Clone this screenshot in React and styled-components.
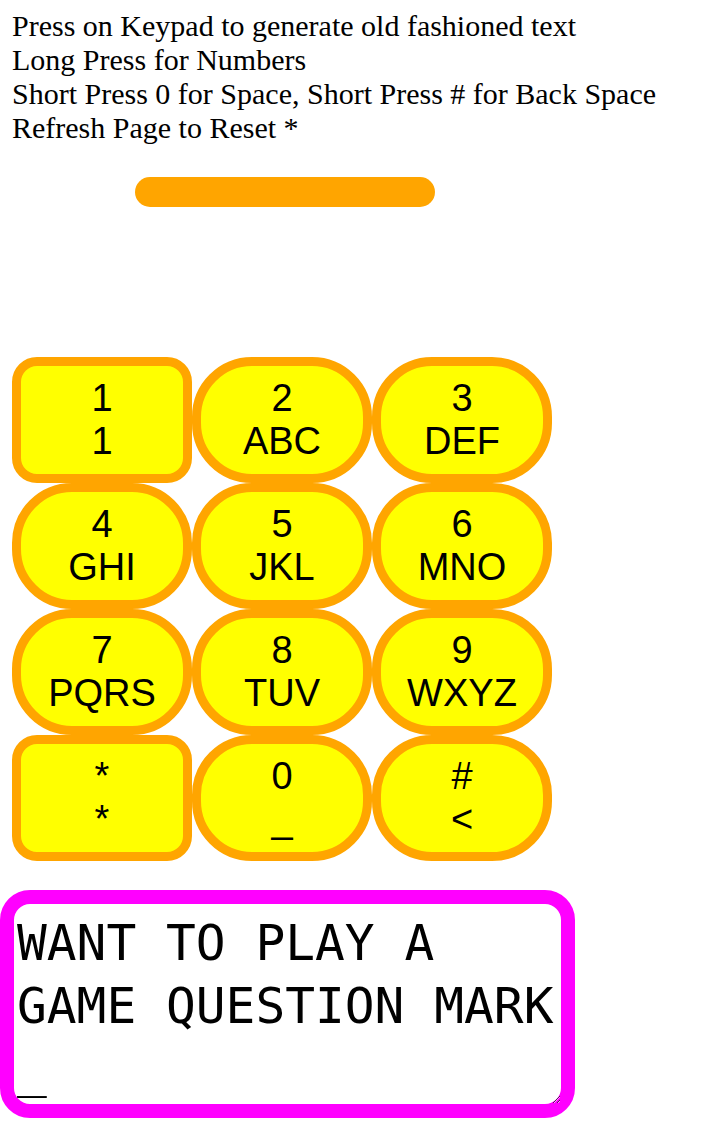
import React from 'react';
import styled, { createGlobalStyle } from 'styled-components';

const keys = [
  { top: '1', bottom: '1', square: true },
  { top: '2', bottom: 'ABC' },
  { top: '3', bottom: 'DEF' },
  { top: '4', bottom: 'GHI' },
  { top: '5', bottom: 'JKL' },
  { top: '6', bottom: 'MNO' },
  { top: '7', bottom: 'PQRS' },
  { top: '8', bottom: 'TUV' },
  { top: '9', bottom: 'WXYZ' },
  { top: '*', bottom: '*', square: true },
  { top: '0', bottom: '_' },
  { top: '#', bottom: '<' },
];

const GlobalStyle = createGlobalStyle`
  body {
    margin: 0;
    background: #fff;
  }
`;

const Page = styled.div`
  display: flex;
  flex-direction: column;
  align-items: flex-start;
  padding-top: 9px;
`;

const Instructions = styled.div`
  margin-left: 12px;
  font-family: 'Liberation Serif', 'Times New Roman', serif;
  font-size: 30px;
  line-height: 34px;
  color: #000;
`;

const HoldBar = styled.div`
  margin: 32px 0 0 135px;
  width: 300px;
  height: 30px;
  border-radius: 15px;
  background: orange;
`;

const Keypad = styled.div`
  display: grid;
  grid-template-columns: repeat(3, 180px);
  grid-auto-rows: 126px;
  margin: 150px 0 0 12px;
`;

const Key = styled.button`
  display: flex;
  flex-direction: column;
  align-items: center;
  justify-content: center;
  box-sizing: border-box;
  padding: 0;
  border: 9px solid orange;
  border-radius: ${props => (props.square ? '25px' : '60px')};
  background: yellow;
  color: #000;
  font-family: 'Liberation Sans', Arial, sans-serif;
  font-size: 38px;
  line-height: normal;
  cursor: pointer;
`;

const Display = styled.textarea`
  margin-top: 29px;
  box-sizing: border-box;
  width: 575px;
  height: 228px;
  padding: 8px 3px 0;
  border: 14px solid magenta;
  border-radius: 30px;
  font-family: 'DejaVu Sans Mono', monospace;
  font-size: 49.5px;
  line-height: 63px;
  color: #000;
  background: #fff;
  overflow: hidden;

  &:focus {
    outline: none;
  }
`;

const App = () => (
  <Page>
    <GlobalStyle />
    <Instructions>
      <div>Press on Keypad to generate old fashioned text</div>
      <div>Long Press for Numbers</div>
      <div>Short Press 0 for Space, Short Press # for Back Space</div>
      <div>Refresh Page to Reset *</div>
    </Instructions>
    <HoldBar />
    <Keypad>
      {keys.map(k => (
        <Key key={k.top} square={k.square ? 1 : 0}>
          <span>{k.top}</span>
          <span>{k.bottom}</span>
        </Key>
      ))}
    </Keypad>
    <Display readOnly value="WANT TO PLAY A GAME QUESTION MARK _" />
  </Page>
);

export default App;
